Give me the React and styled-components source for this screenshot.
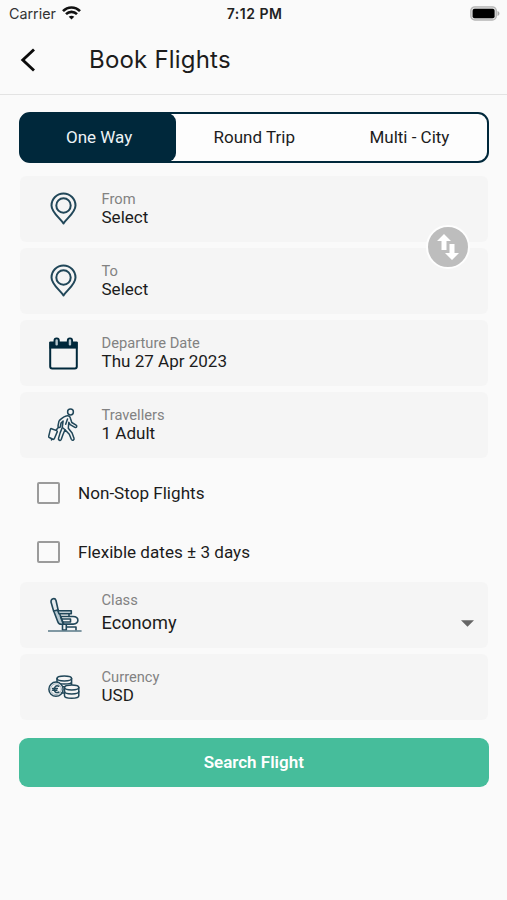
import React, { useState } from 'react';
import styled, { createGlobalStyle } from 'styled-components';

const navy = '#00283b';
const ink = '#214759';

const GlobalStyle = createGlobalStyle`
  * { box-sizing: border-box; }
  body { margin: 0; background: #fafafa; }
  button { font: inherit; border: 0; padding: 0; background: none; color: inherit; }
`;

const Screen = styled.main`
  width: 507px;
  height: 900px;
  background: #fafafa;
  color: #1c1c1c;
  font-family: Roboto, sans-serif;
  font-size: 17px;
  overflow: hidden;
`;

const StatusBar = styled.div`
  display: grid;
  grid-template-columns: 1fr auto 1fr;
  align-items: center;
  height: 28px;
  padding: 0 7px 0 9px;
  font: 400 14.3px/28px Inter, sans-serif;
`;

const Carrier = styled.div`
  display: flex;
  align-items: center;
  gap: 6px;
  color: #333;
  svg { margin-bottom: 2px; }
`;

const Clock = styled.div`
  font-weight: 600;
  font-size: 14px;
  letter-spacing: 0.5px;
  color: #222;
`;

const Power = styled.div`
  display: flex;
  justify-content: flex-end;
  svg { margin-bottom: 2px; }
`;

const Header = styled.header`
  display: flex;
  align-items: center;
  height: 67px;
  padding: 0 20px 3px;
  border-bottom: 1px solid #e3e3e3;
`;

const BackButton = styled.button`
  display: flex;
  width: 69px;
`;

const Title = styled.h1`
  margin: 0;
  font: 400 24px/32px Inter, sans-serif;
  letter-spacing: 0.2px;
`;

const Form = styled.div`
  display: flex;
  flex-direction: column;
  padding: 17px 18.5px 0 19px;
`;

const Tabs = styled.div`
  display: flex;
  height: 51px;
  border: 2.5px solid ${navy};
  border-radius: 11px;
  background: #fdfdfd;
  margin-bottom: 13px;
`;

const Tab = styled.button`
  flex: 1;
  padding: ${p => (p.$active ? '0 0 1px 2px' : '0 0 1px 1px')};
  margin: ${p => (p.$active ? '-1px 0 -1px -1px' : '0')};
  border-radius: 9px;
  background: ${p => (p.$active ? navy : 'transparent')};
  color: ${p => (p.$active ? '#edf3f6' : '#1c1c1c')};
`;

const Stack = styled.section`
  position: relative;
  display: flex;
  flex-direction: column;
  gap: 6px;
  padding: 0 0.5px 0 1px;
`;

const Card = styled.div`
  display: flex;
  height: 66px;
  padding: 0 14px 0 28px;
  border-radius: 6px;
  background: #f5f5f5;
`;

const IconSlot = styled.div`
  display: flex;
  align-items: center;
  width: 53.5px;
`;

const Copy = styled.div`
  display: flex;
  flex: 1;
  flex-direction: column;
  gap: ${p => (p.$gap || 0)}px;
  padding-top: ${p => p.$top}px;
`;

const Label = styled.span`
  font-size: 14.7px;
  line-height: 18px;
  color: #828282;
`;

const Value = styled.span`
  font-size: ${p => p.$size}px;
  line-height: 19px;
`;

const Caret = styled.div`
  display: flex;
  align-items: center;
  padding-top: 16px;
`;

const SwapButton = styled.button`
  position: absolute;
  top: 49px;
  right: 19px;
  display: flex;
  width: 44px;
  height: 44px;
  align-items: center;
  justify-content: center;
  border: 2px solid #fefefe;
  border-radius: 50%;
  background: #bdbdbd;
`;

const Checks = styled.div`
  display: flex;
  flex-direction: column;
  padding: 6px 0 0 18px;
  height: 124px;
`;

const CheckRow = styled.label`
  display: flex;
  align-items: center;
  gap: 18px;
  height: 58.5px;
  font-size: 17.1px;
`;

const CheckBox = styled.input`
  appearance: none;
  width: 23px;
  height: 22px;
  margin: 0;
  border: 2px solid #9b9b9b;
  border-radius: 2px;
  &:checked { background: ${navy}; }
`;

const SearchButton = styled.button`
  height: 49px;
  margin-top: 17.5px;
  border-radius: 9px;
  background: #46bd9b;
  color: #fff;
  font-weight: 600;
`;

const line = { fill: 'none', stroke: ink, strokeLinejoin: 'round', strokeLinecap: 'round' };

const PinIcon = () => (
  <svg width="32" height="34" viewBox="0 0 32 34" {...line} strokeWidth="2">
    <path d="M15.500 31.500C12 26 3.500 20.500 3.500 13.500a12 12 0 0 1 24 0C27.500 20.500 19 26 15.500 31.500Z" />
    <circle cx="15.500" cy="13.500" r="7.200" />
  </svg>
);

const CalendarIcon = () => (
  <svg width="32" height="34" viewBox="0 0 32 34">
    <path d="M2.200 6.500h26.600v24a2 2 0 0 1-2 2H4.200a2 2 0 0 1-2-2Z" fill="#f5f5f5" stroke={navy} strokeWidth="2" strokeLinejoin="round" />
    <path d="M1.500 6h28v6.600h-28Z" fill={navy} />
    <rect x="6.500" y="2.400" width="4.300" height="8" rx="2" fill="#b5c6ce" stroke={navy} strokeWidth="1.900" />
    <rect x="19.800" y="2.400" width="4.300" height="8" rx="2" fill="#b5c6ce" stroke={navy} strokeWidth="1.900" />
  </svg>
);

const TravellerIcon = () => (
  <svg width="32" height="34" viewBox="0 0 32 34" {...line} strokeWidth="1.500">
    <circle cx="22.500" cy="4" r="2.900" />
    <path d="M18.200 8c2-.5 3.700.2 4.200 2.200l1.400 4.300 4.300 2.600c1.500 1 .3 3-1.200 2.300l-4.700-2.700-1.400-2.400-.5 6 3.800 4.700 1.900 5.300c.6 1.900-1.900 2.800-2.700 1l-2-5-4.300-4.600-2.100 5-1.700 4.800c-.7 1.600-3.200.8-2.700-1.100l1.700-5.800 2-4.800.9-6.700-2.100 2-.6 3.400c-.4 1.600-2.700 1.200-2.400-.5l.9-4.700c.2-.9 4.300-4.500 7.300-5.300Z" />
    <path d="m19.500 11-1.800 5.200M15 20l2 1.800M10.500 19.200 8.200 22M3.600 20.700l5 1.900c.6.300.8.700.6 1.300l-2.900 6.800c-.3.600-.8.800-1.400.5l-3.600-1.700c-.6-.3-.8-.7-.6-1.300l1.700-6.800c.2-.6.600-.9 1.200-.7ZM3.500 31.500v.5" />
  </svg>
);

const SeatIcon = () => (
  <svg width="34" height="36" viewBox="0 0 34 36" {...line} strokeWidth="1.600">
    <path d="M3 5c-.2-3.500 4-4.500 5-1.500l2.200 9.700-4.500 1Z" fill="#e5ebee" />
    <path d="m5.700 14 4.500-1 5.500 14.300h-2.500c-2 0-2.900-1-3.500-2.800Z" fill="#b9cad2" />
    <path d="M9.800 13.700h13.500v3H11Z" fill="#bccbd2" />
    <path d="M12.500 19.500H25c6.500 0 6.500 7.600.2 7.600H15.500Z" />
    <path d="M13.500 22h9v3h-8M21 17v2.500M14.500 27.500V33h3.800v-5.500M18.500 30H28v3" />
    <path d="M0 34h33" stroke="#597988" />
  </svg>
);

const CoinsIcon = () => (
  <svg width="32" height="25" viewBox="0 0 32 25" {...line} strokeWidth="1.500">
    <ellipse cx="16.300" cy="3.500" rx="7.300" ry="2.400" />
    <path d="M9 3.500v3.200c0 3 14.600 3 14.600 0V3.500M9 7v2.500c0 3 14.600 3 14.600 0V6.500" />
    <circle cx="8" cy="14.200" r="7.100" fill="#f5f5f5" />
    <circle cx="8" cy="14.200" r="5.400" stroke="#8ba1ac" strokeWidth=".8" />
    <path d="M10.800 11.300c-6-2.800-6 8.800 0 5.800M4.600 13.400h4.800M4.600 15.300h4.300" />
    <path d="M16.500 12.500v8.300c0 3.400 14.300 3.400 14.300 0v-8.300" fill="#f5f5f5" />
    <ellipse cx="23.700" cy="12.500" rx="7.100" ry="2.400" fill="#f5f5f5" />
    <path d="M16.500 16.600c0 3.200 14.300 3.200 14.300 0M13.500 18h3" />
  </svg>
);

const Field = ({ icon, label, value, top = 13.5, gap, size = 17.05, children }) => (
  <Card>
    <IconSlot>{icon}</IconSlot>
    <Copy $top={top} $gap={gap}>
      <Label>{label}</Label>
      <Value $size={size}>{value}</Value>
    </Copy>
    {children}
  </Card>
);

export default function App() {
  const [trip, setTrip] = useState('One Way');
  return (
    <>
      <GlobalStyle />
      <Screen>
        <StatusBar>
          <Carrier>
            Carrier
            <svg width="19" height="14" viewBox="0 0 19 14" fill="none" stroke="#111" strokeWidth="2.600">
              <path d="M1 5.200C5.800.2 13.200.2 18 5.200M4 8.200c3.100-3.100 7.900-3.100 11 0" />
              <path d="M6.700 10.700c1.700-1.400 3.900-1.400 5.600 0L9.500 13.500Z" fill="#111" stroke="none" />
            </svg>
          </Carrier>
          <Clock>7:12 PM</Clock>
          <Power>
            <svg width="30" height="15" viewBox="0 0 30 15">
              <rect x=".8" y=".8" width="25.500" height="13.200" rx="4" fill="#ddd" stroke="#b5b5b5" strokeWidth="1.300" />
              <rect x="2.600" y="2.700" width="22" height="9.500" rx="2" fill="#000" />
              <path d="M27.500 5c2.600 1 2.600 4 0 5Z" fill="#aaa" />
            </svg>
          </Power>
        </StatusBar>
        <Header>
          <BackButton aria-label="Back">
            <svg width="16" height="24" viewBox="0 0 16 24" fill="none" stroke="#0b0b0b" strokeWidth="2.900">
              <path d="M14 1.500 2.800 12 14 22.500" />
            </svg>
          </BackButton>
          <Title>Book Flights</Title>
        </Header>
        <Form>
          <Tabs>
            {['One Way', 'Round Trip', 'Multi - City'].map(name => (
              <Tab key={name} $active={trip === name} onClick={() => setTrip(name)}>{name}</Tab>
            ))}
          </Tabs>
          <Stack>
            <Field icon={<PinIcon />} label="From" value="Select" />
            <Field icon={<PinIcon />} label="To" value="Select" />
            <Field icon={<CalendarIcon />} label="Departure Date" value="Thu 27 Apr 2023" />
            <Field icon={<TravellerIcon />} label="Travellers" value="1 Adult" />
            <SwapButton aria-label="Swap">
              <svg width="24" height="28" viewBox="0 0 24 28" fill="#fff">
                <path d="M8 1 15 8h-4.500v9h-5V8H1ZM16 27l7-7h-4.500v-9h-5v9H9Z" />
              </svg>
            </SwapButton>
          </Stack>
          <Checks>
            <CheckRow><CheckBox type="checkbox" />Non-Stop Flights</CheckRow>
            <CheckRow><CheckBox type="checkbox" />Flexible dates ± 3 days</CheckRow>
          </Checks>
          <Stack>
            <Field icon={<SeatIcon />} label="Class" value="Economy" top={8.5} gap={4.5} size={18.2}>
              <Caret>
                <svg width="13" height="7" viewBox="0 0 13 7" fill="#666"><path d="M0 .3h13L6.500 6.800Z" /></svg>
              </Caret>
            </Field>
            <Field icon={<CoinsIcon />} label="Currency" value="USD" />
          </Stack>
          <SearchButton>Search Flight</SearchButton>
        </Form>
      </Screen>
    </>
  );
}
